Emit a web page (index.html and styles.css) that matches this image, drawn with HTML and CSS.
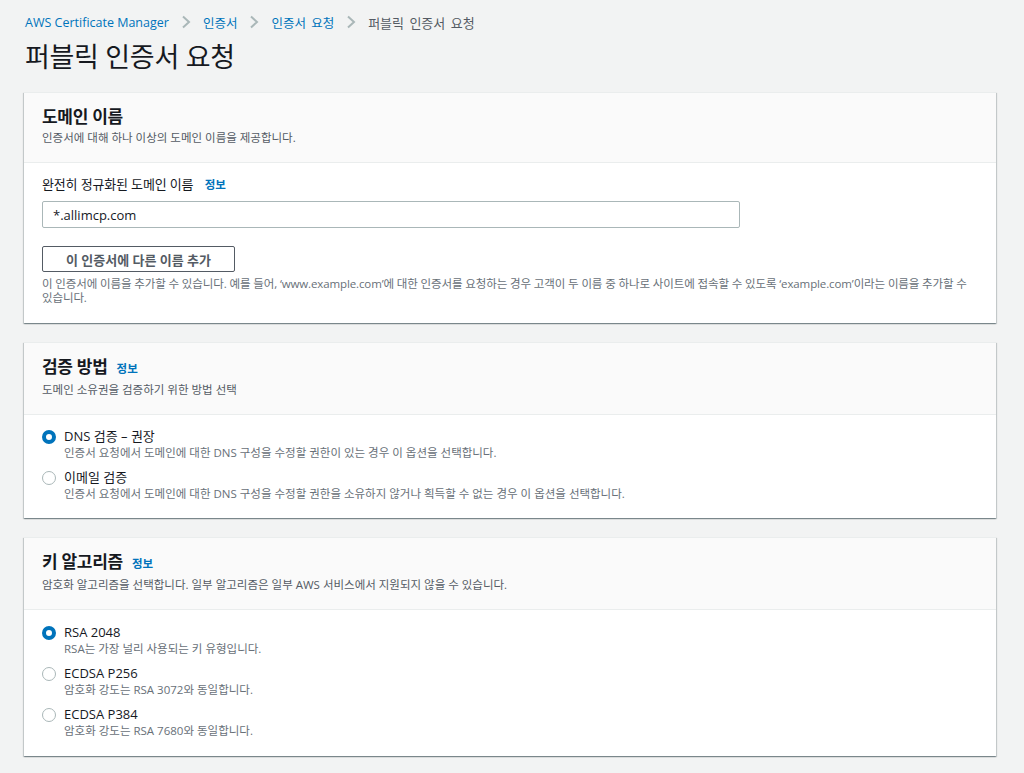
FILE: index.html
```html
<!DOCTYPE html>
<html lang="ko">
<head>
    <meta charset="UTF-8">
    <meta name="viewport" content="width=device-width, initial-scale=1.0">
    <title>퍼블릭 인증서 요청</title>
    <link rel="stylesheet" href="styles.css">
</head>
<body>
    <div class="page">
        <nav class="breadcrumb">
            <a href="#">AWS Certificate Manager</a>
            <svg class="crumb-sep" width="10" height="14" viewBox="0 0 10 14"><path d="M2 1.5 L8 7 L2 12.5" fill="none" stroke="#aab7b8" stroke-width="2"/></svg>
            <a href="#">인증서</a>
            <svg class="crumb-sep" width="10" height="14" viewBox="0 0 10 14"><path d="M2 1.5 L8 7 L2 12.5" fill="none" stroke="#aab7b8" stroke-width="2"/></svg>
            <a href="#" class="crumb-wide">인증서 요청</a>
            <svg class="crumb-sep" width="10" height="14" viewBox="0 0 10 14"><path d="M2 1.5 L8 7 L2 12.5" fill="none" stroke="#aab7b8" stroke-width="2"/></svg>
            <span class="crumb-current">퍼블릭 인증서 요청</span>
        </nav>

        <h1 class="page-title">퍼블릭 인증서 요청</h1>

        <div class="card">
            <div class="card-header">
                <div class="card-title">도메인 이름</div>
                <div class="card-desc">인증서에 대해 하나 이상의 도메인 이름을 제공합니다.</div>
            </div>
            <div class="card-body">
                <div class="field-label">완전히 정규화된 도메인 이름 <a href="#" class="info-link">정보</a></div>
                <input type="text" class="text-input" value="*.allimcp.com">
                <button class="btn">이 인증서에 다른 이름 추가</button>
                <div class="help-text">이 인증서에 이름을 추가할 수 있습니다. 예를 들어, ‘www.example.com’에 대한 인증서를 요청하는 경우 고객이 두 이름 중 하나로 사이트에 접속할 수 있도록 ‘example.com’이라는 이름을 추가할 수 있습니다.</div>
            </div>
        </div>

        <div class="card">
            <div class="card-header">
                <div class="card-title">검증 방법 <a href="#" class="info-link">정보</a></div>
                <div class="card-desc">도메인 소유권을 검증하기 위한 방법 선택</div>
            </div>
            <div class="card-body radio-list">
                <div class="radio-item">
                    <span class="radio checked"></span>
                    <div>
                        <div class="radio-label">DNS 검증 – 권장</div>
                        <div class="radio-desc">인증서 요청에서 도메인에 대한 DNS 구성을 수정할 권한이 있는 경우 이 옵션을 선택합니다.</div>
                    </div>
                </div>
                <div class="radio-item">
                    <span class="radio"></span>
                    <div>
                        <div class="radio-label">이메일 검증</div>
                        <div class="radio-desc">인증서 요청에서 도메인에 대한 DNS 구성을 수정할 권한을 소유하지 않거나 획득할 수 없는 경우 이 옵션을 선택합니다.</div>
                    </div>
                </div>
            </div>
        </div>

        <div class="card">
            <div class="card-header">
                <div class="card-title">키 알고리즘 <a href="#" class="info-link">정보</a></div>
                <div class="card-desc">암호화 알고리즘을 선택합니다. 일부 알고리즘은 일부 AWS 서비스에서 지원되지 않을 수 있습니다.</div>
            </div>
            <div class="card-body radio-list key-list">
                <div class="radio-item">
                    <span class="radio checked"></span>
                    <div>
                        <div class="radio-label">RSA 2048</div>
                        <div class="radio-desc">RSA는 가장 널리 사용되는 키 유형입니다.</div>
                    </div>
                </div>
                <div class="radio-item">
                    <span class="radio"></span>
                    <div>
                        <div class="radio-label">ECDSA P256</div>
                        <div class="radio-desc">암호화 강도는 RSA 3072와 동일합니다.</div>
                    </div>
                </div>
                <div class="radio-item">
                    <span class="radio"></span>
                    <div>
                        <div class="radio-label">ECDSA P384</div>
                        <div class="radio-desc">암호화 강도는 RSA 7680와 동일합니다.</div>
                    </div>
                </div>
            </div>
        </div>
    </div>
</body>
</html>
```

FILE: styles.css
```css
body {
    font-family: "Open Sans", "Noto Sans CJK KR", sans-serif;
    margin: 0;
    background-color: #f2f3f3;
    color: #16191f;
}
a {
    color: #0073bb;
    text-decoration: none;
}
.page {
    padding: 12px 28px 20px 24px;
}
.breadcrumb {
    display: flex;
    align-items: center;
    gap: 12px;
    font-size: 12.5px;
    height: 20px;
    padding-left: 1px;
}
.crumb-wide {
    word-spacing: 2px;
}
.crumb-current {
    color: #545b64;
    font-size: 13px;
    word-spacing: 2px;
}
.page-title {
    font-size: 27px;
    font-weight: 400;
    margin: 7px 0 17px 1px;
    line-height: 36px;
    letter-spacing: -0.3px;
}
.card {
    background: white;
    margin-bottom: 19px;
    box-shadow: 0 1px 1px 0 rgba(0,28,36,0.3), 1px 1px 1px 0 rgba(0,28,36,0.15), -1px 1px 1px 0 rgba(0,28,36,0.15);
    border-top: 1px solid #eaeded;
}
.card-header {
    background: #fafafa;
    border-bottom: 1px solid #eaeded;
    padding: 12px 18px 16px;
}
.card-title {
    font-size: 17px;
    font-weight: 700;
    line-height: 24px;
    letter-spacing: -0.3px;
}
.card-title .info-link {
    margin-left: 5px;
}
.info-link {
    font-size: 11.5px;
    font-weight: 700;
    letter-spacing: 0;
}
.card-desc {
    font-size: 11.5px;
    color: #545b64;
    line-height: 16px;
    margin-top: 1px;
}
.card-body {
    padding: 11px 18px 18px;
}
.field-label {
    font-size: 13px;
    line-height: 20px;
    letter-spacing: -0.15px;
}
.field-label .info-link {
    margin-left: 8px;
}
.text-input {
    display: block;
    box-sizing: border-box;
    width: 698px;
    height: 27px;
    margin-top: 6px;
    padding: 0 10px;
    border: 1px solid #aab7b8;
    border-radius: 2px;
    font-family: inherit;
    font-size: 13px;
    color: #16191f;
}
.btn {
    display: block;
    box-sizing: border-box;
    width: 193px;
    height: 26px;
    margin-top: 18px;
    background: white;
    border: 1px solid #545b64;
    border-radius: 2px;
    font-family: inherit;
    font-size: 13px;
    font-weight: 700;
    color: #545b64;
}
.help-text {
    font-size: 11.5px;
    color: #687078;
    line-height: 14px;
    margin-top: 5px;
    letter-spacing: -0.12px;
}
.radio-list {
    display: flex;
    flex-direction: column;
    gap: 8px;
    padding-top: 12px;
    padding-bottom: 17px;
}
.key-list {
    padding-top: 13px;
    padding-bottom: 18px;
}
.radio-item {
    display: flex;
    align-items: flex-start;
    gap: 8px;
}
.radio {
    box-sizing: border-box;
    width: 14px;
    height: 14px;
    margin-top: 3px;
    border-radius: 50%;
    border: 1px solid #aab7b8;
    background: white;
    flex-shrink: 0;
}
.radio.checked {
    border: 4px solid #0073bb;
}
.radio-label {
    font-size: 13px;
    line-height: 19px;
}
.radio-desc {
    font-size: 11.5px;
    color: #687078;
    line-height: 14px;
}
```
